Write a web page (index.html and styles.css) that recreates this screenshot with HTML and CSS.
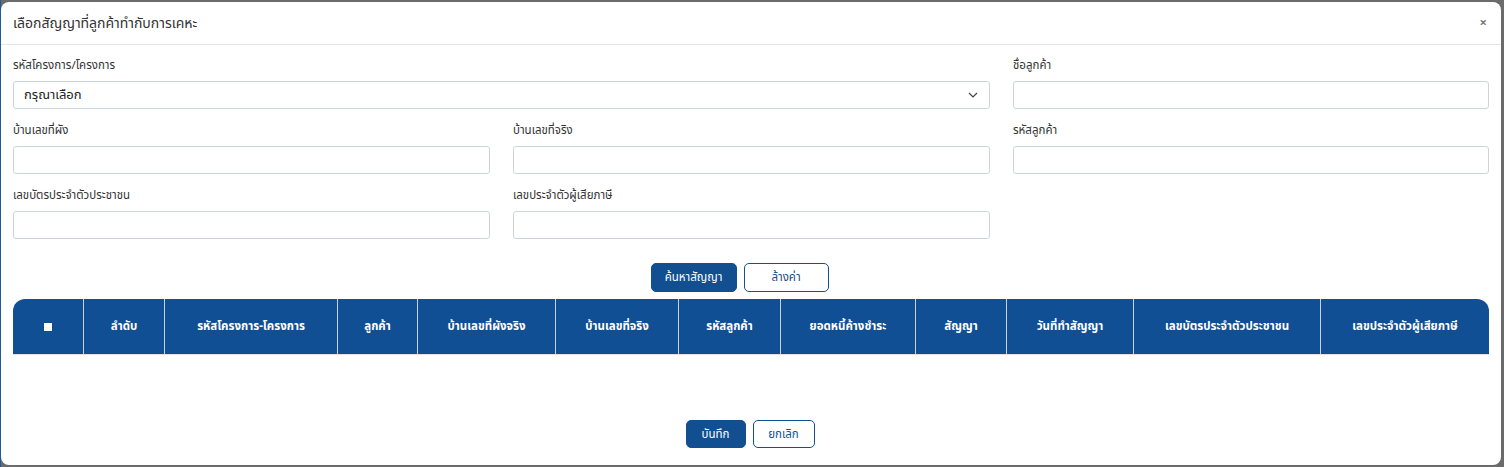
FILE: index.html
```html
<!DOCTYPE html>
<html lang="th">
<head>
<meta charset="utf-8">
<title>เลือกสัญญา</title>
<link rel="stylesheet" href="styles.css">
</head>
<body>
<div class="backdrop">
  <div class="modal">
    <div class="modal-header">
      <div class="modal-title">เลือกสัญญาที่ลูกค้าทำกับการเคหะ</div>
      <div class="modal-close">×</div>
    </div>
    <div class="modal-body">
      <div class="form-grid">
        <div class="field span2">
          <label class="lbl">รหัสโครงการ/โครงการ</label>
          <div class="select">
            <span>กรุณาเลือก</span>
            <svg class="chev" width="10" height="6" viewBox="0 0 10 6"><path d="M1 1l4 4 4-4" fill="none" stroke="#444" stroke-width="1.2"/></svg>
          </div>
        </div>
        <div class="field">
          <label class="lbl">ชื่อลูกค้า</label>
          <div class="input"></div>
        </div>
        <div class="field">
          <label class="lbl">บ้านเลขที่ผัง</label>
          <div class="input"></div>
        </div>
        <div class="field">
          <label class="lbl">บ้านเลขที่จริง</label>
          <div class="input"></div>
        </div>
        <div class="field">
          <label class="lbl">รหัสลูกค้า</label>
          <div class="input"></div>
        </div>
        <div class="field">
          <label class="lbl">เลขบัตรประจำตัวประชาชน</label>
          <div class="input"></div>
        </div>
        <div class="field">
          <label class="lbl">เลขประจำตัวผู้เสียภาษี</label>
          <div class="input"></div>
        </div>
      </div>
      <div class="actions">
        <button class="btn btn-primary btn-search">ค้นหาสัญญา</button>
        <button class="btn btn-outline btn-clear">ล้างค่า</button>
      </div>
      <table class="grid">
        <colgroup>
          <col class="c1"><col class="c2"><col class="c3"><col class="c4"><col class="c5"><col class="c6">
          <col class="c7"><col class="c8"><col class="c9"><col class="c10"><col class="c11"><col class="c12">
        </colgroup>
        <thead>
          <tr>
            <th><span class="chk"></span></th>
            <th>ลำดับ</th>
            <th>รหัสโครงการ-โครงการ</th>
            <th>ลูกค้า</th>
            <th>บ้านเลขที่ผังจริง</th>
            <th>บ้านเลขที่จริง</th>
            <th>รหัสลูกค้า</th>
            <th>ยอดหนี้ค้างชำระ</th>
            <th>สัญญา</th>
            <th>วันที่ทำสัญญา</th>
            <th>เลขบัตรประจำตัวประชาชน</th>
            <th>เลขประจำตัวผู้เสียภาษี</th>
          </tr>
        </thead>
      </table>
      <div class="footer">
        <button class="btn btn-primary btn-save">บันทึก</button>
        <button class="btn btn-outline btn-cancel">ยกเลิก</button>
      </div>
    </div>
  </div>
</div>
</body>
</html>
```
FILE: styles.css
```css
html, body {
  margin: 0;
  padding: 0;
}
body {
  background: #6b6b6b;
  width: 1504px;
  height: 467px;
  overflow: hidden;
  font-family: "Noto Sans Thai", "Noto Sans", "Liberation Sans", sans-serif;
  color: #333;
}
.backdrop {
  padding: 2px 3px 2px 0;
  border-left: 1px solid #1f5b9b;
  height: 463px;
}
.modal {
  background: #fff;
  border-radius: 8px;
  height: 463px;
  display: flex;
  flex-direction: column;
}
.modal-header {
  height: 42px;
  border-bottom: 1px solid #e5e5e5;
  padding: 0 12px;
  display: flex;
  align-items: center;
  justify-content: space-between;
}
.modal-title {
  font-size: 14px;
  color: #333;
}
.modal-close {
  font-size: 13px;
  color: #777;
  font-weight: bold;
  margin-right: 2px;
}
.modal-body {
  padding: 13px 12px 0 12px;
  display: flex;
  flex-direction: column;
}
.form-grid {
  display: grid;
  grid-template-columns: 477px 477px 476px;
  column-gap: 23px;
  row-gap: 14px;
}
.span2 {
  grid-column: span 2;
}
.field {
  display: flex;
  flex-direction: column;
}
.lbl {
  font-size: 11.5px;
  line-height: 16px;
  height: 16px;
  margin-bottom: 7px;
  color: #333;
}
.input, .select {
  height: 28px;
  box-sizing: border-box;
  border: 1px solid #cfd4da;
  border-radius: 3px;
  background: #fff;
}
.select {
  display: flex;
  align-items: center;
  justify-content: space-between;
  padding: 0 10px 0 10px;
  font-size: 13px;
  color: #222;
}
.chev {
  margin-right: 1px;
}
.actions {
  display: flex;
  justify-content: center;
  gap: 7px;
  margin-top: 24px;
  padding-right: 23px;
}
.btn {
  font-family: inherit;
  font-size: 11.5px;
  height: 29px;
  border-radius: 5px;
  box-sizing: border-box;
  padding: 0;
  cursor: pointer;
}
.btn-primary {
  background: #114f91;
  border: 1px solid #114f91;
  color: #fff;
}
.btn-outline {
  background: #fff;
  border: 1px solid #114f91;
  color: #114f91;
}
.btn-search { width: 86px; }
.btn-clear { width: 85px; }
.grid {
  margin-top: 7px;
  width: 1476px;
  table-layout: fixed;
  border-collapse: separate;
  border-spacing: 0;
  border-bottom: 1px solid #e2e2e2;
}
.grid th {
  background: #114f94;
  color: #fff;
  height: 55px;
  font-size: 11.5px;
  font-weight: bold;
  text-align: center;
  padding: 0;
  border-left: 1px solid #c9d3e0;
}
.grid th:first-child {
  border-left: none;
  border-top-left-radius: 12px;
}
.grid th:last-child {
  border-top-right-radius: 12px;
}
.chk {
  display: inline-block;
  width: 8px;
  height: 8px;
  background: #fff;
  vertical-align: middle;
}
.c1 { width: 70px; }
.c2 { width: 81px; }
.c3 { width: 173px; }
.c4 { width: 80px; }
.c5 { width: 138px; }
.c6 { width: 123px; }
.c7 { width: 102px; }
.c8 { width: 135px; }
.c9 { width: 91px; }
.c10 { width: 127px; }
.c11 { width: 187px; }
.c12 { width: 169px; }
.footer {
  display: flex;
  justify-content: center;
  gap: 7px;
  margin-top: 65px;
  padding-right: 2px;
}
.footer .btn { height: 28px; }
.btn-save { width: 60px; }
.btn-cancel { width: 62px; }
```
